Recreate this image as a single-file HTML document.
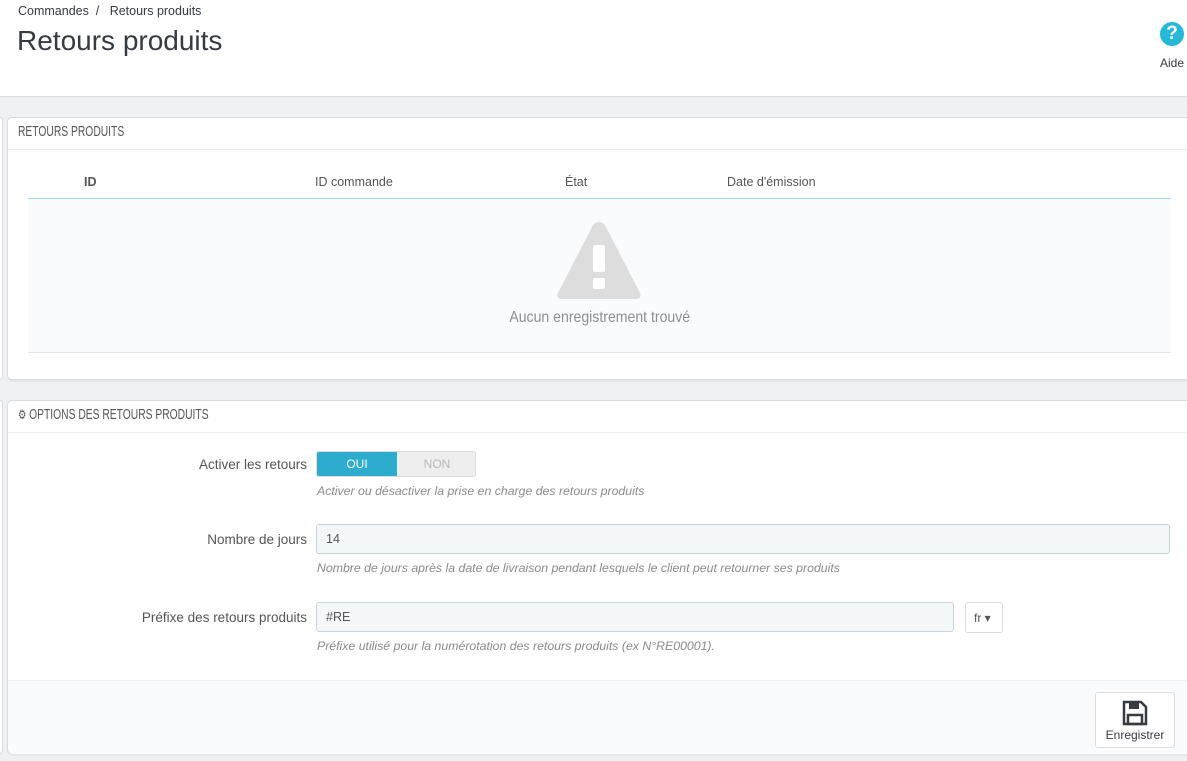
<!DOCTYPE html>
<html><head><meta charset="utf-8"><style>
*{box-sizing:border-box;margin:0;padding:0}
body{width:1187px;height:761px;overflow:hidden;background:#eff1f2;font-family:"Liberation Sans",sans-serif;color:#555;position:relative}
.top{position:absolute;left:0;top:0;width:1187px;height:97px;background:#fff;border-bottom:1px solid #d9dcde}
.bc{position:absolute;left:18px;top:4px;font-size:12.5px;color:#363a41}
h1{position:absolute;left:17px;top:25px;font-size:28px;font-weight:normal;color:#363a41}
.help{position:absolute;left:1160px;top:22px;width:24px;height:24px;border-radius:50%;background:#25b9d7;color:#fff;font-weight:bold;font-size:19px;text-align:center;line-height:24px}
.aide{position:absolute;left:1160px;top:56px;font-size:12px;color:#363a41}
.side{position:absolute;left:0;width:3px;background:#fff;border:1px solid #d9dcde;border-left:none;border-radius:0 4px 4px 0}
.panel{position:absolute;left:7px;width:1190px;background:#fff;border:1px solid #d9dcde;border-radius:5px;box-shadow:0 2px 0 rgba(0,0,0,.04)}
.ph{height:32px;border-bottom:1px solid #eee;font-size:14.5px;color:#555;padding:6px 0 0 10px}
.ph span.t{display:inline-block;transform:scaleX(.71);transform-origin:left;white-space:nowrap}
.lbl{position:absolute;font-size:13.5px;color:#555;text-align:right;width:299px;left:0}
.hint{position:absolute;left:309px;font-size:12.3px;font-style:italic;color:#8a8a8a}
.inp{position:absolute;left:309px;height:30px;background:#f5f8f9;border:1px solid #c7d6db;border-radius:3px;font-size:12.5px;color:#555;padding:7px 0 0 9px}
</style></head><body>
<div class="top">
<div class="bc">Commandes &nbsp;/&nbsp;&nbsp; Retours produits</div>
<h1>Retours produits</h1>
<div class="help">?</div>
<div class="aide">Aide</div>
</div>
<div class="side" style="top:117px;height:263px"></div>
<div class="side" style="top:400px;height:354px"></div>

<div class="panel" style="top:117px;height:263px">
<div class="ph"><span class="t">RETOURS PRODUITS</span></div>
<div style="position:absolute;left:76px;top:57px;font-size:12.5px;font-weight:bold;color:#555">ID</div>
<div style="position:absolute;left:307px;top:57px;font-size:12.5px">ID commande</div>
<div style="position:absolute;left:557px;top:57px;font-size:12.5px">État</div>
<div style="position:absolute;left:719px;top:57px;font-size:12.5px">Date d'émission</div>
<div style="position:absolute;left:20px;top:80px;width:1143px;height:155px;background:#fafbfc;border-top:1px solid #a0d0eb;border-bottom:1px solid #e5e5e5">
<svg style="position:absolute;left:528px;top:22px" width="86" height="80" viewBox="0 0 86 80"><path d="M37 4 Q43 -2 49 4 L84 72 Q86 78 80 78 L6 78 Q0 78 2 72 Z" fill="#dddddd"/><rect x="37" y="24" width="12" height="27" rx="2" fill="#fff"/><rect x="37" y="57" width="12" height="11" rx="2" fill="#fff"/></svg>
<div style="position:absolute;left:0;width:100%;top:110px;text-align:center;font-size:16px;color:#8a8f96"><span style="display:inline-block;transform:scaleX(.88)">Aucun enregistrement trouvé</span></div>
</div>
</div>

<div class="panel" style="top:400px;height:354px">
<div class="ph"><span class="t"><span style="font-size:13px">⚙</span> OPTIONS DES RETOURS PRODUITS</span></div>
<div class="lbl" style="top:56px">Activer les retours</div>
<div style="position:absolute;left:308px;top:50px;width:160px;height:26px;border-radius:3px;background:#eee;border:1px solid #ddd;overflow:hidden">
<div style="position:absolute;left:0;top:0;width:80px;height:24px;background:#2eacce;color:#fff;font-size:12px;text-align:center;line-height:24px">OUI</div>
<div style="position:absolute;left:80px;top:0;width:80px;height:24px;color:#bbb;font-size:12px;text-align:center;line-height:24px">NON</div>
</div>
<div class="hint" style="top:83px">Activer ou désactiver la prise en charge des retours produits</div>
<div class="lbl" style="top:131px">Nombre de jours</div>
<div class="inp" style="top:123px;width:854px;left:308px">14</div>
<div class="hint" style="top:160px">Nombre de jours après la date de livraison pendant lesquels le client peut retourner ses produits</div>
<div class="lbl" style="top:209px">Préfixe des retours produits</div>
<div class="inp" style="top:201px;width:638px;left:308px">#RE</div>
<div style="position:absolute;left:957px;top:201px;width:38px;height:31px;border:1px solid #ddd;border-radius:3px;font-size:12px;color:#555;padding:8px 0 0 8px">fr ▾</div>
<div class="hint" style="top:238px">Préfixe utilisé pour la numérotation des retours produits (ex N°RE00001).</div>
<div style="position:absolute;left:0;top:279px;width:100%;height:74px;background:#fafbfc;border-top:1px solid #eee;border-radius:0 0 5px 5px">
<div style="position:absolute;left:1087px;top:11px;width:80px;height:56px;background:#fff;border:1px solid #ddd;border-radius:3px;text-align:center">
<svg style="margin-top:7px" width="26" height="26" viewBox="0 0 26 26"><path d="M2 2 H19 L24 7 V24 H2 Z" fill="none" stroke="#363a41" stroke-width="2.5"/><rect x="7" y="2" width="10" height="7" fill="#363a41"/><rect x="6" y="15" width="14" height="9" fill="none" stroke="#363a41" stroke-width="2.5"/></svg>
<div style="font-size:12px;color:#363a41;margin-top:-3px">Enregistrer</div>
</div>
</div>
</div>
</body></html>
